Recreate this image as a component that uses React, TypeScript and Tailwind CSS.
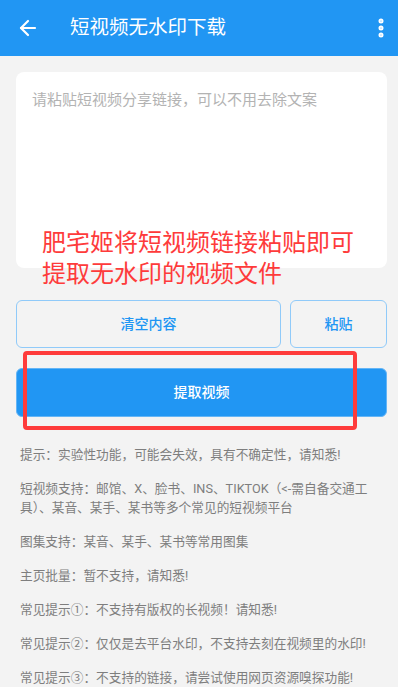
import React from "react";
import { ArrowLeft, EllipsisVertical } from "lucide-react";

const tips: string[] = [
  "提示：实验性功能，可能会失效，具有不确定性，请知悉!",
  "短视频支持：邮馆、X、脸书、INS、TIKTOK（<-需自备交通工具）、某音、某手、某书等多个常见的短视频平台",
  "图集支持：某音、某手、某书等常用图集",
  "主页批量：暂不支持，请知悉!",
  "常见提示①：不支持有版权的长视频！请知悉!",
  "常见提示②：仅仅是去平台水印，不支持去刻在视频里的水印!",
  "常见提示③：不支持的链接，请尝试使用网页资源嗅探功能!",
];

export default function App() {
  return (
    <div
      className="relative w-[398px] h-[687px] overflow-hidden bg-[#f3f3f3]"
      style={{ fontFamily: 'Roboto, "Noto Sans CJK SC", sans-serif' }}
    >
      <header className="h-14 bg-[#2196f3] flex items-center pl-4 pr-[5px] text-white">
        <ArrowLeft size={24} strokeWidth={2.2} />
        <div className="ml-[30px] text-[19.5px] leading-none flex-1">短视频无水印下载</div>
        <EllipsisVertical size={24} strokeWidth={3} />
      </header>

      <main className="pl-4 pr-[11px] pt-4">
        <div className="h-[196px] rounded-lg bg-white px-4 pt-[18px]">
          <div className="text-[15px] leading-5 text-[#b3b3b3]">请粘贴短视频分享链接，可以不用去除文案</div>
        </div>

        <div className="mt-8 flex gap-[9px]">
          <button className="flex-1 h-12 rounded-md border border-[#90caf9] bg-transparent text-[14px] font-medium text-[#2196f3]">
            清空内容
          </button>
          <button className="w-[97px] h-12 rounded-md border border-[#90caf9] bg-transparent text-[14px] font-medium text-[#2196f3]">
            粘贴
          </button>
        </div>

        <button className="mt-5 w-full h-[49px] rounded-md bg-[#2196f3] border border-[#64b5f6] text-[14px] font-medium text-white">
          提取视频
        </button>

        <div className="mt-[28px] pl-1 pr-[13px] flex flex-col gap-[15px] text-[12.7px] leading-[19px] text-[#7e7e7e]">
          {tips.map((t) => (
            <p key={t}>{t}</p>
          ))}
        </div>
      </main>

      <div className="absolute left-[42px] top-[228px] text-[24px] leading-[31px] text-[#fe3b3b]">
        肥宅姬将短视频链接粘贴即可
        <br />
        提取无水印的视频文件
      </div>

      <div className="absolute left-[23px] top-[351px] w-[334px] h-[79px] border-4 border-[#fe3b3b] rounded-[4px]" />
    </div>
  );
}
